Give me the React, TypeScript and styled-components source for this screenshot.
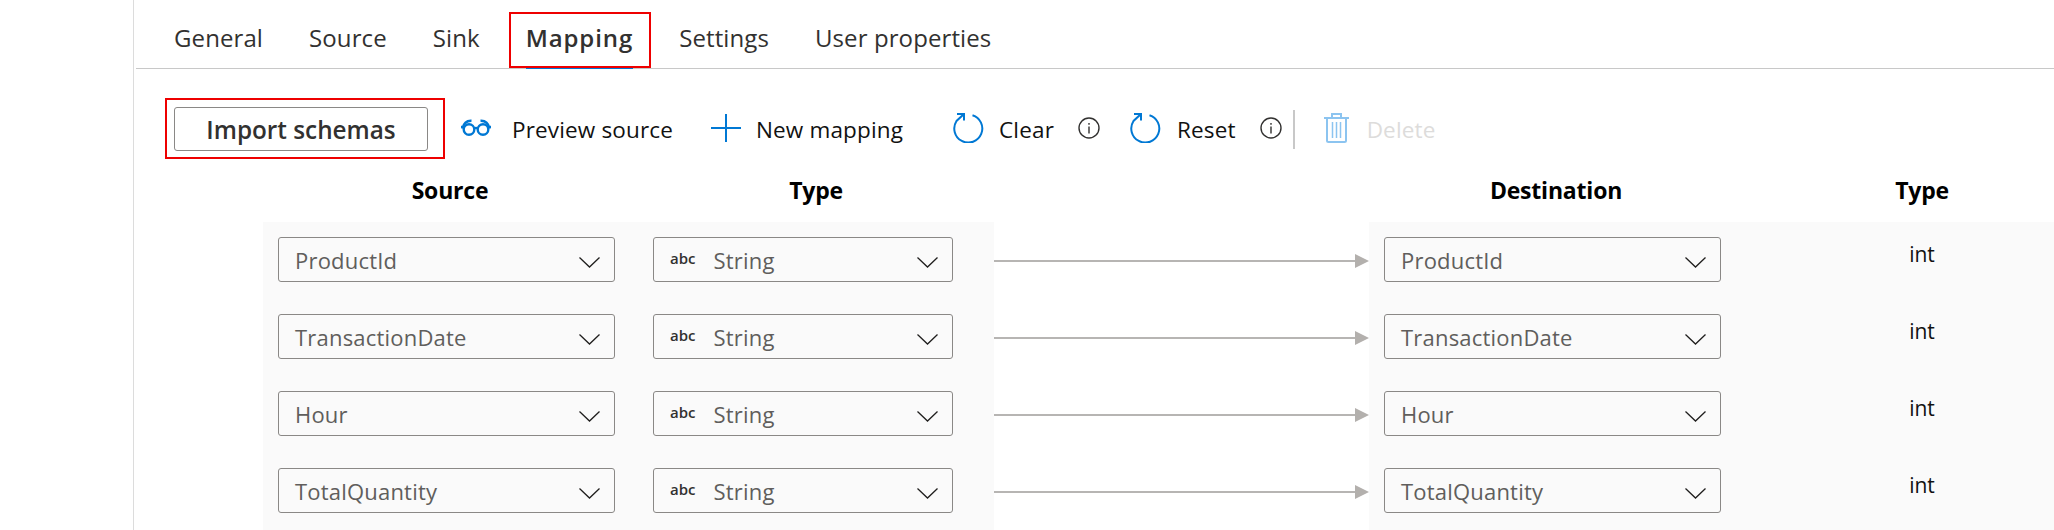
import React from "react";
import styled, { createGlobalStyle } from "styled-components";

const Global = createGlobalStyle`
  html, body { margin: 0; padding: 0; background: #fff; }
  #root { width: 2054px; height: 530px; overflow: hidden; }
  * { box-sizing: border-box; }
`;

const Page = styled.div`
  display: flex;
  width: 2054px;
  height: 530px;
  overflow: hidden;
  font-family: "Open Sans", "Noto Sans", sans-serif;
  background: #fff;
`;
const Rail = styled.div`
  flex: 0 0 134px;
  border-right: 1px solid #dcdcdc;
`;
const Main = styled.div`
  flex: 1;
  display: flex;
  flex-direction: column;
  min-width: 0;
`;
const TabBar = styled.div`
  display: flex;
  height: 69px;
  margin-left: 2px;
  padding-left: 38px;
  gap: 46px;
  border-bottom: 1px solid #c8c8c8;
`;
const Tab = styled.div<{ $active?: boolean }>`
  position: relative;
  height: 68px;
  line-height: 76px;
  font-size: 24px;
  letter-spacing: ${(p) => (p.$active ? "0.9px" : "0.1px")};
  font-weight: ${(p) => (p.$active ? 600 : 400)};
  color: #323130;
  ${(p) =>
    p.$active &&
    `
    &::before {
      content: "";
      position: absolute;
      left: 0; right: 0; bottom: -1px;
      height: 3px;
      background: #0078d4;
    }
    &::after {
      content: "";
      position: absolute;
      left: -17px; right: -18px; top: 12px; height: 52px;
      border: 2px solid #ee0000;
    }
  `}
`;
const Toolbar = styled.div`
  display: flex;
  align-items: center;
  height: 103px;
  padding-left: 40px;
  padding-top: 2px;
`;
const ImportFrame = styled.div`
  padding: 7px 15px 6px 7px;
  border: 2px solid #ee0000;
  margin-left: -9px;
  margin-top: 14px;
`;
const ImportButton = styled.div`
  width: 254px;
  height: 44px;
  border: 1px solid #8a8886;
  border-radius: 3px;
  display: flex;
  align-items: center;
  justify-content: center;
  font-size: 24.3px;
  font-weight: 600;
  color: #323130;
`;
const ToolItem = styled.div<{ $left: number; $disabled?: boolean }>`
  display: flex;
  align-items: center;
  margin-left: ${(p) => p.$left}px;
  margin-top: 16px;
  font-size: 22.5px;
  letter-spacing: 0.15px;
  color: ${(p) => (p.$disabled ? "#dddcdb" : "#111")};
  white-space: nowrap;
`;
const IconSlot = styled.span<{ $gap: number }>`
  display: inline-flex;
  margin-right: ${(p) => p.$gap}px;
  margin-top: -4px;
`;
const Info = styled.svg<{ $left: number }>`
  margin-left: ${(p) => p.$left}px;
  margin-top: 12px;
  flex: none;
`;
const Sep = styled.div`
  width: 2px;
  height: 39px;
  background: #c8c8c8;
  margin-left: 11px;
  margin-top: 16px;
`;
const HeaderRow = styled.div`
  display: flex;
  height: 50px;
  padding-left: 129px;
  padding-bottom: 14px;
  align-items: center;
`;
const HeaderCell = styled.div<{ $w: number }>`
  flex: 0 0 ${(p) => p.$w}px;
  text-align: center;
  font-size: 23px;
  font-weight: 700;
  color: #000;
  letter-spacing: -0.2px;
`;
const Row = styled.div`
  display: flex;
  height: 77px;
  padding-left: 129px;
`;
const SourceCell = styled.div`
  flex: 0 0 731px;
  display: flex;
  gap: 38px;
  padding: 15px 0 0 15px;
  background: #fafafa;
`;
const DestCell = styled.div`
  flex: 1;
  display: flex;
  padding: 15px 0 0 15px;
  background: #fafafa;
`;
const Select = styled.div<{ $w: number }>`
  width: ${(p) => p.$w}px;
  height: 45px;
  display: flex;
  align-items: center;
  justify-content: space-between;
  padding: 0 14px 0 16px;
  background: #fafafa;
  border: 1px solid #8a8886;
  border-radius: 3px;
  font-size: 22px;
  color: #605e5c;
  letter-spacing: 0.2px;
`;
const SelectLabel = styled.span`
  display: flex;
  align-items: center;
`;
const Abc = styled.span`
  font-size: 15px;
  font-weight: 600;
  color: #323130;
  margin-right: 18px;
  margin-top: -4px;
  letter-spacing: 0;
`;
const Chevron = styled.svg`
  margin-top: 5px;
  flex: none;
`;
const Connector = styled.div`
  flex: 0 0 375px;
  height: 45px;
  margin-top: 15px;
  display: flex;
  align-items: center;
  padding-top: 2px;
`;
const Line = styled.div`
  flex: 1;
  height: 2px;
  background: #b7b5b3;
`;
const Head = styled.div`
  width: 0;
  height: 0;
  border-left: 14px solid #b3b0ad;
  border-top: 7px solid transparent;
  border-bottom: 7px solid transparent;
`;
const IntCell = styled.div`
  flex: 1;
  padding: 0 0 0 69px;
  text-align: center;
  font-size: 21px;
  line-height: 34px;
  color: #111;
`;

const Blue = "#0078d4";

const Glasses = () => (
  <svg width="30" height="17" viewBox="0 0 30 17" fill="none" stroke={Blue} strokeWidth="2.4">
    <circle cx="8" cy="10.5" r="5.3" />
    <circle cx="22" cy="10.5" r="5.3" />
    <path d="M13 9.5c1.3-.8 2.7-.8 4 0" />
    <path d="M1.5 9.5 C2.5 5 5 1.5 10.5 1.8" />
    <path d="M28.5 9.5 C27.5 5 25 1.5 19.5 1.8" />
    <path d="M0 8h3M27 8h3" />
  </svg>
);
const Plus = () => (
  <svg width="30" height="28" viewBox="0 0 30 28" fill="none" stroke={Blue} strokeWidth="2">
    <path d="M15 0v28M0 14h30" />
  </svg>
);
const Refresh = () => (
  <svg width="31" height="30" viewBox="0 0 31 30" fill="none" stroke={Blue} strokeWidth="2">
    <path d="M19.5 2.2 A14 14 0 1 1 3.5 8 L11 1" />
    <path d="M4 1 H11 V7.5" />
  </svg>
);
const Trash = () => (
  <svg width="25" height="30" viewBox="0 0 25 30" fill="none" stroke="#8cc4f0" strokeWidth="2">
    <path d="M0 5h25M8 5V1h9v4M3 5v22.5a1.5 1.5 0 0 0 1.5 1.5h16a1.5 1.5 0 0 0 1.5-1.5V5" />
    <path d="M8.5 9v16M12.5 9v16M16.5 9v16" strokeWidth="1.5" />
  </svg>
);
const InfoIcon = ({ left }: { left: number }) => (
  <Info $left={left} width="22" height="22" viewBox="0 0 22 22" fill="none" stroke="#323130" strokeWidth="1.4">
    <circle cx="11" cy="11" r="10" />
    <path d="M11 9.5v7M11 6v1.8" />
  </Info>
);
const Down = () => (
  <Chevron width="21" height="11" viewBox="0 0 21 11" fill="none" stroke="#201f1e" strokeWidth="1.3">
    <path d="M0.5 0.5 L10.5 10 L20.5 0.5" />
  </Chevron>
);

const fields = ["ProductId", "TransactionDate", "Hour", "TotalQuantity"];
const tabs = ["General", "Source", "Sink", "Mapping", "Settings", "User properties"];

export default function App() {
  return (
    <Page>
      <Global />
      <Rail />
      <Main>
        <TabBar>
          {tabs.map((t) => (
            <Tab key={t} $active={t === "Mapping"}>
              {t}
            </Tab>
          ))}
        </TabBar>
        <Toolbar>
          <ImportFrame>
            <ImportButton>Import schemas</ImportButton>
          </ImportFrame>
          <ToolItem $left={16}>
            <IconSlot $gap={21}>
              <Glasses />
            </IconSlot>
            Preview source
          </ToolItem>
          <ToolItem $left={38}>
            <IconSlot $gap={15}>
              <Plus />
            </IconSlot>
            New mapping
          </ToolItem>
          <ToolItem $left={50}>
            <IconSlot $gap={15}>
              <Refresh />
            </IconSlot>
            Clear
          </ToolItem>
          <InfoIcon left={24} />
          <ToolItem $left={30}>
            <IconSlot $gap={16}>
              <Refresh />
            </IconSlot>
            Reset
          </ToolItem>
          <InfoIcon left={24} />
          <Sep />
          <ToolItem $left={29} $disabled>
            <IconSlot $gap={18}>
              <Trash />
            </IconSlot>
            Delete
          </ToolItem>
        </Toolbar>
        <HeaderRow>
          <HeaderCell $w={374}>Source</HeaderCell>
          <HeaderCell $w={358}>Type</HeaderCell>
          <HeaderCell $w={375} />
          <HeaderCell $w={372}>Destination</HeaderCell>
          <HeaderCell $w={360}>Type</HeaderCell>
        </HeaderRow>
        {fields.map((f) => (
          <Row key={f}>
            <SourceCell>
              <Select $w={337}>
                <SelectLabel>{f}</SelectLabel>
                <Down />
              </Select>
              <Select $w={300}>
                <SelectLabel>
                  <Abc>abc</Abc>
                  String
                </SelectLabel>
                <Down />
              </Select>
            </SourceCell>
            <Connector>
              <Line />
              <Head />
            </Connector>
            <DestCell>
              <Select $w={337}>
                <SelectLabel>{f}</SelectLabel>
                <Down />
              </Select>
              <IntCell>int</IntCell>
            </DestCell>
          </Row>
        ))}
      </Main>
    </Page>
  );
}
